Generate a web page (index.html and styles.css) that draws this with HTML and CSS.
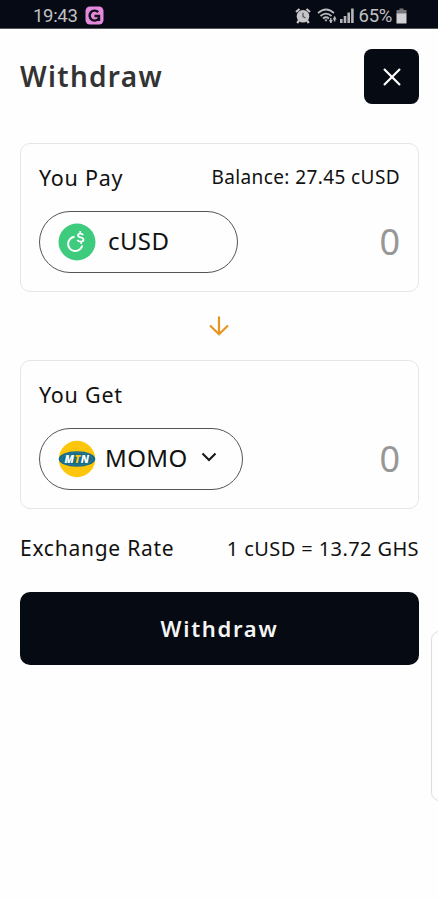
FILE: index.html
```html
<!DOCTYPE html>
<html lang="en">
<head>
    <meta charset="UTF-8">
    <meta name="viewport" content="width=device-width, initial-scale=1.0">
    <title>Withdraw</title>
    <link rel="stylesheet" href="styles.css">
</head>
<body>
    <div class="status-bar">
        <div class="status-left">
            <span class="time">19:43</span>
            <svg class="app-icon" width="19" height="19" viewBox="0 0 19 19" fill="none">
                <rect x="0.5" y="0.5" width="18" height="18" rx="4.5" fill="#e489dc"/>
                <path d="M13.2 6.1A5 5 0 1 0 14 12V10H9.5M14 9.5V15" stroke="#15101d" stroke-width="2.4"/>
            </svg>
        </div>
        <div class="status-right">
            <svg class="alarm" width="16" height="16" viewBox="0 0 16 16">
                <path d="M1 4 4.5 1M15 4 11.5 1M4 12.5 2.2 15M12 12.5l1.8 2.5" stroke="#c5c5c7" stroke-width="2.2"/>
                <circle cx="8" cy="8.2" r="6.3" fill="#c5c5c7"/>
                <path d="M8 4.8V8.6L10.5 10" fill="none" stroke="#555a60" stroke-width="1.3"/>
            </svg>
            <svg class="wifi" width="20" height="16" viewBox="0 0 20 16" fill="none" stroke="#bcbcbf" stroke-width="1.7">
                <path d="M1 5.2Q9 -2.2 17 5.2M3.5 8Q9 3.1 14.5 8M6 10.5Q9 8 12 10.5"/>
                <path d="M7.3 11.4h3.4L9 13.8z" fill="#bcbcbf" stroke="none"/>
                <path d="M13.8 10v5M17.6 8.5v5" stroke-width="1.4"/>
                <path d="M11.8 12h4l-2 3.2zM15.6 11.5h4l-2-3.2z" fill="#bcbcbf" stroke="none"/>
            </svg>
            <svg class="signal" width="14" height="15" viewBox="0 0 14 15" fill="#b5b5b8">
                <path d="M0 11h2.6v4H0zM3.7 8h2.6v7H3.7zM7.4 4.5H10V15H7.4z"/>
                <path d="M11.1 0.5h2.6V15h-2.6z"/>
            </svg>
            <span class="percent">65%</span>
            <svg class="battery" width="11" height="16" viewBox="0 0 11 16">
                <path d="M3.5 0.5h4V2H10.5V6H0.5V2h3z" fill="#77797d"/>
                <path d="M0.5 5.5h10V15.5H0.5z" fill="#d2d2d4"/>
            </svg>
        </div>
    </div>

    <div class="container">
        <div class="header">
            <h1>Withdraw</h1>
            <button type="button" class="close-btn" aria-label="Close">
                <svg width="18" height="18" viewBox="0 0 18 18" fill="none" stroke="#fff" stroke-width="2.2">
                    <path d="M1 1 17 17M17 1 1 17"/>
                </svg>
            </button>
        </div>

        <div class="card">
            <div class="card-top">
                <span class="card-label">You Pay</span>
                <span class="balance">Balance: 27.45 cUSD</span>
            </div>
            <div class="card-row">
                <div class="select select-pay">
                    <svg width="38" height="38" viewBox="0 0 38 38" fill="none" stroke="#fff">
                        <circle cx="19" cy="19" r="18.5" fill="#3fcb7e" stroke="none"/>
                        <path d="M16.5 13.7A7.2 7.2 0 1 0 24.3 22.5" stroke-width="2"/>
                        <path d="M25.2 12.1C24 10.2 20 10 20 12.6C20 15.2 25.5 13.6 25.5 16.7C25.5 19.3 20.7 19.1 19.3 17M22.2 8v2.6M23.2 18.3v2.8" stroke-width="1.7"/>
                    </svg>
                    <span class="cusd">cUSD</span>
                </div>
                <span class="amount">0</span>
            </div>
        </div>

        <div class="arrow">
            <svg width="20" height="20" viewBox="0 0 20 20" fill="none" stroke="#e6951f" stroke-width="2.2">
                <path d="M10 0.5V18.3M1 9.5 10 18.3 19 9.5"/>
            </svg>
        </div>

        <div class="card">
            <div class="card-top">
                <span class="card-label">You Get</span>
            </div>
            <div class="card-row">
                <div class="select select-get">
                    <svg width="38" height="38" viewBox="0 0 38 38">
                        <circle cx="19" cy="19" r="18.2" fill="#fdc60a"/>
                        <ellipse cx="19" cy="19" rx="18.3" ry="7.7" fill="#156b87"/>
                        <ellipse cx="19" cy="19" rx="15.5" ry="6.2" fill="none" stroke="#398198" stroke-width="0.7"/>
                        <text x="19" y="22.6" text-anchor="middle" class="mtn">M<tspan fill="#fdc60a">T</tspan>N</text>
                    </svg>
                    <span class="momo">MOMO</span>
                    <svg class="chevron" width="16" height="10" viewBox="0 0 16 10" fill="none" stroke="#171717" stroke-width="2.1">
                        <path d="M1.5 1.5 8 8 14.5 1.5"/>
                    </svg>
                </div>
                <span class="amount">0</span>
            </div>
        </div>

        <div class="rate">
            <span class="rate-label">Exchange Rate</span>
            <span class="rate-value">1 cUSD = 13.72 GHS</span>
        </div>

        <button type="button" class="withdraw-btn">Withdraw</button>
    </div>

    <div class="edge-handle"></div>
</body>
</html>
```
FILE: styles.css
```css
* {
    margin: 0;
    padding: 0;
    box-sizing: border-box;
}

body {
    font-family: 'Noto Sans', 'Open Sans', sans-serif;
    background: #fefefe;
    color: #111;
    min-height: 100vh;
    position: relative;
    overflow: hidden;
}

.status-bar {
    height: 29px;
    background: #060a14;
    border-bottom: 1px solid #55565b;
    display: flex;
    justify-content: space-between;
    padding: 3px 31px 0 33px;
    font-family: Roboto, sans-serif;
    font-size: 18.5px;
    line-height: 26px;
    color: #c0c0c2;
}

.status-left,
.status-right {
    display: flex;
    align-items: center;
}

.time {
    letter-spacing: -0.3px;
}

.app-icon {
    margin-left: 7px;
}

.wifi {
    margin-left: 6px;
}

.signal {
    margin-left: 3px;
}

.percent {
    margin-left: 5px;
    letter-spacing: -0.3px;
}

.battery {
    margin-left: 4px;
}

.container {
    padding: 20px 19px 0 20px;
}

.header {
    display: flex;
    justify-content: space-between;
    align-items: center;
    height: 55px;
    margin-bottom: 39px;
}

h1 {
    color: #333;
    font-size: 28px;
    font-weight: 600;
    letter-spacing: 1.3px;
    line-height: 38px;
    margin-bottom: 2px;
}

.close-btn {
    width: 55px;
    height: 55px;
    border: none;
    border-radius: 8px;
    background: #060a12;
    display: flex;
    align-items: center;
    justify-content: center;
}

.card {
    height: 149px;
    border: 1px solid #e6e6e6;
    border-radius: 10px;
    padding: 18px;
}

.card-top {
    display: flex;
    justify-content: space-between;
    height: 32px;
    line-height: 32px;
    margin-bottom: 17px;
}

.card-label {
    font-size: 21.5px;
    letter-spacing: 0.75px;
}

.balance {
    font-size: 19px;
    letter-spacing: 0.4px;
    line-height: 30px;
}

.card-row {
    display: flex;
    justify-content: space-between;
    align-items: center;
}

.select {
    display: flex;
    align-items: center;
    height: 62px;
    border: 1px solid #555;
    border-radius: 31px;
    padding-left: 18px;
    font-size: 24px;
    line-height: 32px;
}

.select-pay {
    width: 199px;
}

.select-get {
    width: 204px;
}

.cusd {
    margin: -3px 0 0 12px;
    letter-spacing: 0.4px;
}

.momo {
    margin: -3px 0 0 9px;
    letter-spacing: 0.4px;
}

.chevron {
    margin: -4px 0 0 13px;
}

.mtn {
    font-family: 'Open Sans', sans-serif;
    font-size: 10.5px;
    font-weight: 800;
    font-style: italic;
    letter-spacing: 0.4px;
    fill: #fff;
}

.amount {
    color: #979797;
    font-size: 36px;
    line-height: 40px;
}

.arrow {
    height: 68px;
    display: flex;
    align-items: center;
    justify-content: center;
    padding-right: 1px;
}

.rate {
    display: flex;
    justify-content: space-between;
    align-items: center;
    height: 30px;
    margin: 24px 0 29px;
}

.rate-label {
    font-size: 21px;
    letter-spacing: 0.75px;
}

.rate-value {
    font-size: 20px;
    letter-spacing: 0.4px;
}

.withdraw-btn {
    display: block;
    width: 100%;
    height: 73px;
    border: none;
    border-radius: 10px;
    background: #060a12;
    color: #f5f5f5;
    font-family: inherit;
    font-size: 22px;
    font-weight: 600;
    letter-spacing: 1.7px;
    padding-bottom: 2px;
}

/* panel handle peeking in from the right edge of the screen */
.edge-handle {
    position: absolute;
    top: 631px;
    right: -10px;
    width: 17px;
    height: 170px;
    border: 1px solid #ddd;
    border-radius: 9px;
}
```
